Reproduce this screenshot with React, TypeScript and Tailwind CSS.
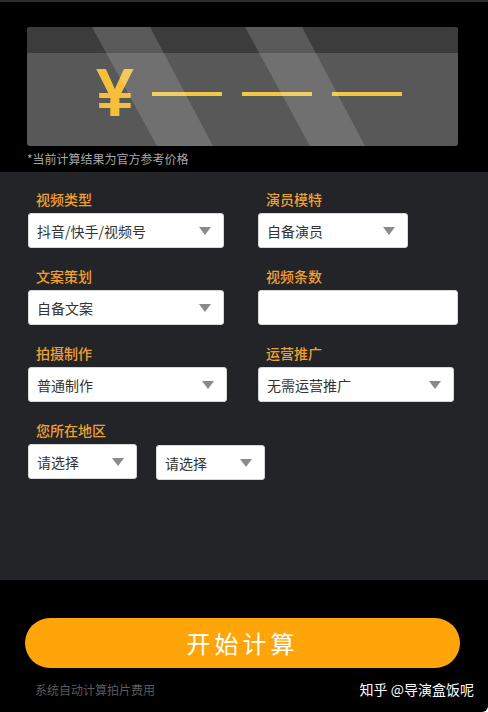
import React from 'react';

const font = { fontFamily: '"Noto Sans CJK SC", "Noto Sans", sans-serif' };

function Caret() {
  return (
    <svg width="12" height="8" viewBox="0 0 12 8" className="shrink-0">
      <polygon points="0,0 12,0 6,8" fill="#8a8a8a" />
    </svg>
  );
}

function Select({ value, width }: { value: string; width: string }) {
  return (
    <div className={`${width} h-[35px] bg-white rounded-[3px] border border-[#d8d8d8] flex items-center justify-between pl-[8px] pr-[12px]`}>
      <span className="text-[14px] text-[#333] leading-none">{value}</span>
      <Caret />
    </div>
  );
}

function Label({ children }: { children: React.ReactNode }) {
  return <div className="pl-[8px] h-[20px] mb-[4px] text-[14px] leading-[20px] font-medium text-[#f0a033]">{children}</div>;
}

export default function App() {
  return (
    <div className="w-[488px] h-[712px] bg-black flex flex-col overflow-hidden rounded-br-md" style={font}>
      <div className="h-[2px] bg-[#2c2c2e]" />

      {/* price card */}
      <div className="pl-[27px] pr-[30px] pt-[25px]">
        <div className="relative h-[119px] rounded-[3px] overflow-hidden bg-[#585858] flex flex-col">
          <div className="h-[26px] bg-[#3c3c3c]" />
          <div className="flex-1 flex items-center pl-[69px] -mt-[16px]">
            <span className="text-[68px] leading-none font-semibold text-[#f5bf3c]" style={{ fontFamily: '"Liberation Sans", sans-serif' }}>¥</span>
            <div className="flex items-center gap-[20px] ml-[18px] mt-[4px]">
              <div className="w-[70px] h-[4px] bg-[#f3c445]" />
              <div className="w-[70px] h-[4px] bg-[#f3c445]" />
              <div className="w-[70px] h-[4px] bg-[#f3c445]" />
            </div>
          </div>
          <svg className="absolute inset-0" width="431" height="119" viewBox="0 0 431 119">
            <polygon points="65,0 123,0 186,119 130,119" fill="white" fillOpacity="0.15" />
            <polygon points="218,0 275,0 338,119 283,119" fill="white" fillOpacity="0.15" />
          </svg>
        </div>
        <div className="mt-[5px] text-[12px] leading-[16px] text-[#a8a8a8]">*当前计算结果为官方参考价格</div>
      </div>

      {/* form */}
      <div className="mt-[5px] h-[408px] bg-[#232427] pl-[28px] pt-[17px] flex flex-col gap-[18px]">
        <div className="flex">
          <div className="w-[230px]">
            <Label>视频类型</Label>
            <Select value="抖音/快手/视频号" width="w-[196px]" />
          </div>
          <div>
            <Label>演员模特</Label>
            <Select value="自备演员" width="w-[150px]" />
          </div>
        </div>
        <div className="flex">
          <div className="w-[230px]">
            <Label>文案策划</Label>
            <Select value="自备文案" width="w-[196px]" />
          </div>
          <div>
            <Label>视频条数</Label>
            <div className="w-[200px] h-[35px] bg-white rounded-[3px] border border-[#d8d8d8]" />
          </div>
        </div>
        <div className="flex">
          <div className="w-[230px]">
            <Label>拍摄制作</Label>
            <Select value="普通制作" width="w-[199px]" />
          </div>
          <div>
            <Label>运营推广</Label>
            <Select value="无需运营推广" width="w-[196px]" />
          </div>
        </div>
        <div>
          <Label>您所在地区</Label>
          <div className="flex items-start gap-[19px]">
            <Select value="请选择" width="w-[109px]" />
            <div className="mt-[1px]">
              <Select value="请选择" width="w-[109px]" />
            </div>
          </div>
        </div>
      </div>

      {/* bottom */}
      <div className="flex-1 pt-[38px]">
        <div className="px-[25px]">
          <button className="w-[435px] h-[50px] rounded-full bg-[#ffa50a] text-white text-[24px] tracking-[4px] flex items-center justify-center">
            开始计算
          </button>
        </div>
        <div className="flex items-center justify-between mt-[11px] pl-[35px] pr-[14px]">
          <span className="text-[12px] text-[#5c5c5c]">系统自动计算拍片费用</span>
          <span className="text-[14px] text-white">知乎 @导演盒饭呢</span>
        </div>
      </div>
    </div>
  );
}
